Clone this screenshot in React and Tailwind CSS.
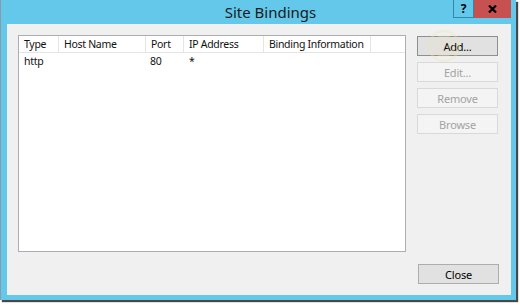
import React from "react";

const columns = [
  { label: "Type", w: "w-[40px]" },
  { label: "Host Name", w: "w-[87px]" },
  { label: "Port", w: "w-[38px]" },
  { label: "IP Address", w: "w-[80px]" },
  { label: "Binding Information", w: "w-[107px]" },
];

function DlgButton({ children, disabled, primary }) {
  return (
    <button
      className={
        "w-[81px] h-[20px] flex items-center justify-center text-[11px] leading-none border tracking-[-0.2px] " +
        (disabled
          ? "bg-[#f4f4f4] border-[#d9d9d9] text-[#a3a3a3]"
          : primary
          ? "bg-[#e1e1e1] border-[#8f8f8f] text-black"
          : "bg-[#e1e1e1] border-[#adadad] text-black")
      }
    >
      {children}
    </button>
  );
}

export default function App() {
  return (
    <div
      className="w-[520px] h-[305px] bg-white relative overflow-hidden"
      style={{ fontFamily: '"Segoe UI", "Noto Sans", sans-serif' }}
    >
      {/* window frame */}
      <div className="w-[516px] h-[300px] bg-[#63c8ea] border-l border-[#8b9aa4] flex flex-col shadow-[2px_2px_1px_rgba(40,40,40,0.85)]">
        {/* title bar */}
        <div className="h-[24px] relative flex items-center justify-center">
          <span className="text-[15px] text-[#1a1a1a] ml-[24px] mt-[1px]">Site Bindings</span>
          <div className="absolute right-[5px] top-0 flex">
            <div className="w-[21px] h-[18px] border border-[#2f8aa8] border-t-0 flex items-center justify-center text-[12px] font-bold text-black">
              ?
            </div>
            <div className="w-[37px] h-[18px] bg-[#c75050] flex items-center justify-center">
              <svg width="9" height="8" viewBox="0 0 9 8">
                <path d="M1 0.5 L8 7.5 M8 0.5 L1 7.5" stroke="#000" strokeWidth="2.2" />
              </svg>
            </div>
          </div>
        </div>

        {/* client area */}
        <div className="flex-1 mx-[6px] mr-[5px] mb-[5px] bg-[#f0f0f0] flex flex-col pl-[11px] pt-[11px] relative">
          <div className="flex gap-[11px]">
            {/* list view */}
            <div className="w-[388px] h-[217px] bg-white border border-[#abadb3] text-[10.5px] tracking-[-0.3px] text-[#111] whitespace-nowrap">
              <div className="flex h-[17px] border-b border-[#e5e5e5]">
                {columns.map((c, i) => (
                  <div
                    key={i}
                    className={c.w + " border-r border-[#e5e5e5] pl-[5px] flex items-center leading-none overflow-hidden"}
                  >
                    {c.label}
                  </div>
                ))}
              </div>
              <div className="flex h-[16px] items-center leading-none">
                <div className="w-[40px] pl-[5px]">http</div>
                <div className="w-[87px]" />
                <div className="w-[38px] pl-[4px]">80</div>
                <div className="w-[80px] pl-[5px]">*</div>
              </div>
            </div>

            {/* side buttons */}
            <div className="flex flex-col gap-[6px] mt-[1px]">
              <DlgButton primary>Add...</DlgButton>
              <DlgButton disabled>Edit...</DlgButton>
              <DlgButton disabled>Remove</DlgButton>
              <DlgButton disabled>Browse</DlgButton>
            </div>
          </div>

          <div className="flex justify-end mt-[12px] pr-[12px]">
            <DlgButton>Close</DlgButton>
          </div>

          {/* click highlight */}
          <svg className="absolute left-[420px] top-[5px] pointer-events-none" width="34" height="34" viewBox="0 0 34 34">
            <circle cx="17" cy="17" r="15" fill="none" stroke="#f3e4ae" strokeOpacity="0.4" strokeWidth="2" />
            <circle cx="17" cy="17" r="10" fill="none" stroke="#f3e4ae" strokeOpacity="0.35" strokeWidth="2" />
            <circle cx="17" cy="17" r="5" fill="none" stroke="#f3e4ae" strokeOpacity="0.3" strokeWidth="2" />
          </svg>
        </div>
      </div>
    </div>
  );
}
